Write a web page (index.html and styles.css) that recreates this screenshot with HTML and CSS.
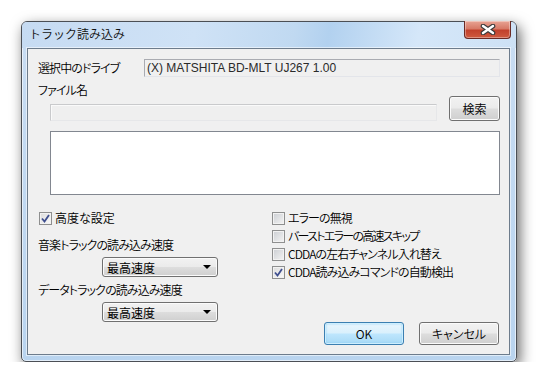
FILE: index.html
```html
<!DOCTYPE html>
<html lang="ja">
<head>
  <meta charset="UTF-8">
  <title>トラック読み込み</title>
  <link rel="stylesheet" href="styles.css">
</head>
<body>

  <div class="window">
    <div class="titlebar">
      <span class="title">トラック読み込み</span>
      <div class="close">
        <svg width="16" height="11" viewBox="0 0 16 11">
          <path d="M3 2 L13 9 M13 2 L3 9" stroke="#3a3a3a" stroke-width="4.6" stroke-linecap="round"/>
          <path d="M3 2 L13 9 M13 2 L3 9" stroke="#fff" stroke-width="2.4" stroke-linecap="round"/>
        </svg>
      </div>
    </div>

    <div class="client">
      <div class="drive-row">
        <span class="label drive-label">選択中のドライブ</span>
        <div class="static-field">(X) MATSHITA BD-MLT UJ267 1.00</div>
      </div>

      <div class="file-grid">
        <span class="label file-label">ファイル名</span>
        <div class="text-field"></div>
        <div class="btn search-btn">検索</div>
      </div>

      <div class="list-box"></div>

      <div class="options">
        <div class="col-left">
          <div class="check first">
            <span class="box checked"><svg width="9" height="9" viewBox="0 0 9 9"><path d="M1 4.5 L3.5 7.5 L8 1" fill="none" stroke="#3f4f8f" stroke-width="1.8"/></svg></span>
            <span class="wide">高度な設定</span>
          </div>
          <div class="label speed-label">音楽トラックの読み込み速度</div>
          <div class="select">最高速度<span class="arrow"></span></div>
          <div class="label speed-label second">データトラックの読み込み速度</div>
          <div class="select">最高速度<span class="arrow"></span></div>
        </div>

        <div class="col-right">
          <div class="check">
            <span class="box"></span>
            <span>エラーの無視</span>
          </div>
          <div class="check">
            <span class="box"></span>
            <span class="tight">バーストエラーの高速スキップ</span>
          </div>
          <div class="check">
            <span class="box"></span>
            <span>CDDAの左右チャンネル入れ替え</span>
          </div>
          <div class="check">
            <span class="box checked"><svg width="9" height="9" viewBox="0 0 9 9"><path d="M1 4.5 L3.5 7.5 L8 1" fill="none" stroke="#3f4f8f" stroke-width="1.8"/></svg></span>
            <span>CDDA読み込みコマンドの自動検出</span>
          </div>

          <div class="actions">
            <div class="btn btn-default">OK</div>
            <div class="btn">キャンセル</div>
          </div>
        </div>
      </div>
    </div>
  </div>

</body>
</html>
```

FILE: styles.css
```css
/* Page */
body {
  margin: 0;
  background: #fff;
  font-family: "Noto Sans CJK JP", sans-serif;
  font-size: 12px;
  font-weight: 350;
  color: #000;
}

/* Window frame */
.window {
  margin: 21px 0 0 21px;
  width: 496px;
  height: 341px;
  box-sizing: border-box;
  border: 1px solid #4b4f55;
  border-radius: 6px 6px 5px 5px;
  background: linear-gradient(to bottom, #c9ddf3, #b9d4ef);
  box-shadow: inset 0 0 0 1px rgba(255, 255, 255, 0.6), 3px 5px 14px rgba(0, 0, 0, 0.6);
  display: flex;
  flex-direction: column;
}

.titlebar {
  height: 26px;
  display: flex;
  justify-content: space-between;
  align-items: flex-start;
  border-radius: 5px 5px 0 0;
  background: linear-gradient(100deg, #c6dbf2 0%, #cfe2f6 35%, #c0d9f1 55%, #b2d1ef 62%, #d5e7f9 80%, #cde1f5 100%);
}

.title {
  margin: 4px 0 0 7px;
  font-size: 12px;
  line-height: 16px;
  color: #111;
}

.close {
  width: 47px;
  height: 18px;
  margin: -1px 5px 0 0;
  box-sizing: border-box;
  border: 1px solid #6b2a25;
  border-top: none;
  border-radius: 0 0 4px 4px;
  background: linear-gradient(to bottom, #e8a494 0%, #d77a67 45%, #c2412c 55%, #cf5a3f 100%);
  box-shadow: inset 0 0 0 1px rgba(255, 255, 255, 0.35);
  display: flex;
  justify-content: center;
  align-items: center;
}

/* Client area */
.client {
  flex: 1;
  margin: 0 6px 6px 5px;
  border: 1px solid #6d7c8c;
  background: #f0f0f0;
  padding: 10px 9px 0 10px;
  box-shadow: 0 0 0 1px rgba(255, 255, 255, 0.55);
}

.label,
.check {
  font-feature-settings: "palt";
  letter-spacing: -0.9px;
  line-height: 16px;
  white-space: nowrap;
}

.wide {
  letter-spacing: 0;
}

.tight {
  letter-spacing: -1.7px;
}

.drive-row {
  display: flex;
  align-items: center;
  height: 18px;
}

.drive-label {
  width: 106px;
  flex-shrink: 0;
}

.static-field {
  flex: 1;
  height: 18px;
  box-sizing: border-box;
  border: 1px solid;
  border-color: #a9abb1 #e3e5ea #e3e5ea #a9abb1;
  padding-left: 2px;
  font-family: "Liberation Sans", sans-serif;
  font-weight: 400;
  line-height: 16px;
  color: #2a2a2a;
}

/* File name row */
.file-grid {
  margin-top: 5px;
  display: grid;
  grid-template-columns: 1fr 51px;
  grid-template-rows: 16px 17px;
  column-gap: 12px;
  row-gap: 6px;
}

.file-label {
  grid-column: 1;
  grid-row: 1;
}

.text-field {
  grid-column: 1;
  grid-row: 2;
  margin-left: 12px;
  box-sizing: border-box;
  border: 1px solid;
  border-color: #c9cacc #e6e7e9 #e6e7e9 #c9cacc;
  background: #efefef;
  box-shadow: inset 1px 1px 0 #fafafa;
}

.search-btn {
  grid-column: 2;
  grid-row: 1 / 3;
  align-self: end;
  height: 25px;
}

.list-box {
  margin: 10px 0 0 12px;
  height: 64px;
  box-sizing: border-box;
  border: 1px solid #828790;
  background: #fff;
}

/* Buttons */
.btn {
  box-sizing: border-box;
  border: 1px solid #707070;
  border-radius: 3px;
  background: linear-gradient(to bottom, #f2f2f2 0%, #ebebeb 48%, #dddddd 52%, #cfcfcf 100%);
  box-shadow: inset 0 0 0 1px #fbfbfb;
  display: flex;
  justify-content: center;
  align-items: center;
  font-feature-settings: "palt";
  font-size: 12px;
}

.btn-default {
  border-color: #3c7fb1;
  background: linear-gradient(to bottom, #eaf6fd 0%, #d9f0fc 48%, #bee6fd 52%, #a7d9f5 100%);
  box-shadow: inset 0 0 0 1px #cdeefe, inset 0 0 2px 1px #8fd1f5;
}

/* Options */
.options {
  margin-top: 14px;
  display: grid;
  grid-template-columns: 234px 1fr;
}

.check {
  display: flex;
  align-items: center;
  height: 18px;
}

.check .box {
  margin-right: 3px;
}

.check.first {
  margin-left: 1px;
}

.box {
  width: 13px;
  height: 13px;
  box-sizing: border-box;
  border: 1px solid #8e8f8f;
  background: linear-gradient(135deg, #cbced3, #f4f4f4);
  box-shadow: inset 0 0 0 1px #f2f2f2;
  display: flex;
  justify-content: center;
  align-items: center;
  flex-shrink: 0;
}

.box.checked {
  background: linear-gradient(135deg, #dcdcdc, #fafafa);
}

.speed-label {
  margin-top: 10px;
}

.speed-label.second {
  margin-top: 5px;
}

.select {
  margin: 4px 0 0 64px;
  width: 116px;
  height: 20px;
  box-sizing: border-box;
  border: 1px solid #707070;
  border-radius: 3px;
  background: linear-gradient(to bottom, #f2f2f2 0%, #ebebeb 48%, #dddddd 52%, #cfcfcf 100%);
  box-shadow: inset 0 0 0 1px #fbfbfb;
  padding: 0 0 0 4px;
  display: flex;
  align-items: center;
  justify-content: space-between;
  font-size: 12px;
  font-weight: 400;
}

.arrow {
  width: 0;
  height: 0;
  margin-right: 6px;
  border-left: 4px solid transparent;
  border-right: 4px solid transparent;
  border-top: 4px solid #000;
}

.col-right {
  display: flex;
  flex-direction: column;
}

.actions {
  margin-top: 41px;
  display: flex;
  justify-content: flex-end;
  gap: 15px;
  padding-right: 1px;
}

.actions .btn {
  width: 80px;
  height: 23px;
}
```
